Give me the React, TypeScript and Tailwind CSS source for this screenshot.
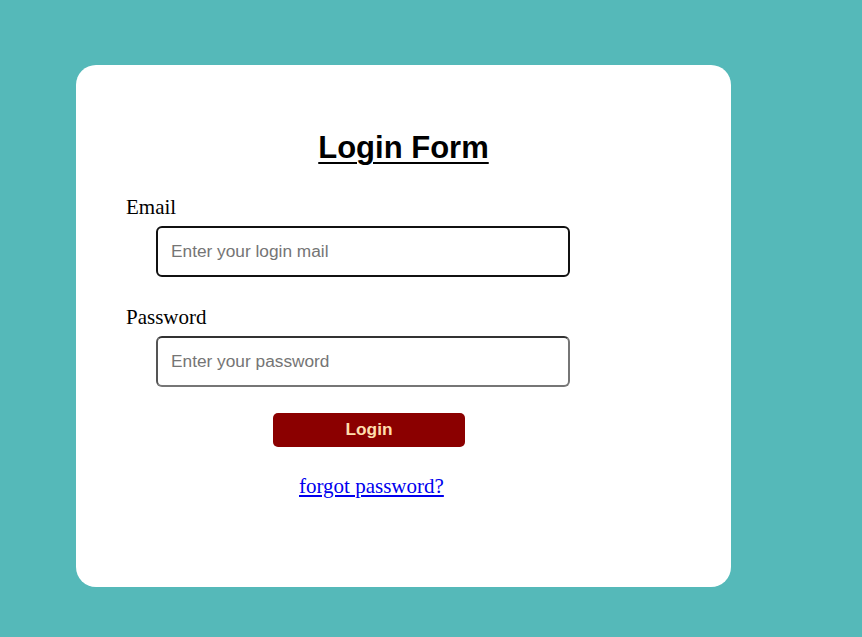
export default function App() {
  return (
    <div className="min-h-[637px] w-full bg-[#55b9b9] pt-[65px] pl-[76px]">
      <div className="w-[655px] h-[522px] rounded-[20px] bg-white pt-[65px]">
        <h1 className="text-center font-['Liberation_Sans',Arial,sans-serif] text-[31px] leading-[36px] font-bold text-black underline decoration-[2px] underline-offset-[4px]">
          Login Form
        </h1>

        <form className="pl-[50px] pt-[29px] font-['Liberation_Serif','Times_New_Roman',serif]">
          <label className="block text-[21px] leading-[24px] text-black">Email</label>
          <input
            type="email"
            placeholder="Enter your login mail"
            className="mt-[7px] ml-[30px] block w-[414px] h-[51px] rounded-[6px] border-2 border-[#111] pl-[13px] font-['Liberation_Sans',Arial,sans-serif] text-[17.3px] text-black placeholder:text-[#757575] outline-none"
          />

          <label className="mt-[28px] block text-[21px] leading-[24px] text-black">Password</label>
          <input
            type="password"
            placeholder="Enter your password"
            className="mt-[7px] ml-[30px] block w-[414px] h-[51px] rounded-[6px] border-2 border-[#767676] border-t-[#333] border-l-[#555] pl-[13px] font-['Liberation_Sans',Arial,sans-serif] text-[17.3px] text-black placeholder:text-[#757575] outline-none"
          />

          <button
            type="button"
            className="mt-[26px] ml-[147px] block w-[192px] h-[34px] rounded-[5px] bg-[#8b0000] font-['Liberation_Sans',Arial,sans-serif] text-[17.3px] font-bold text-[#ffdead]"
          >
            Login
          </button>

          <a
            href="#"
            className="mt-[27px] ml-[173px] inline-block text-[21px] leading-[24px] text-[#0000ee] underline"
          >
            forgot password?
          </a>
        </form>
      </div>
    </div>
  );
}
